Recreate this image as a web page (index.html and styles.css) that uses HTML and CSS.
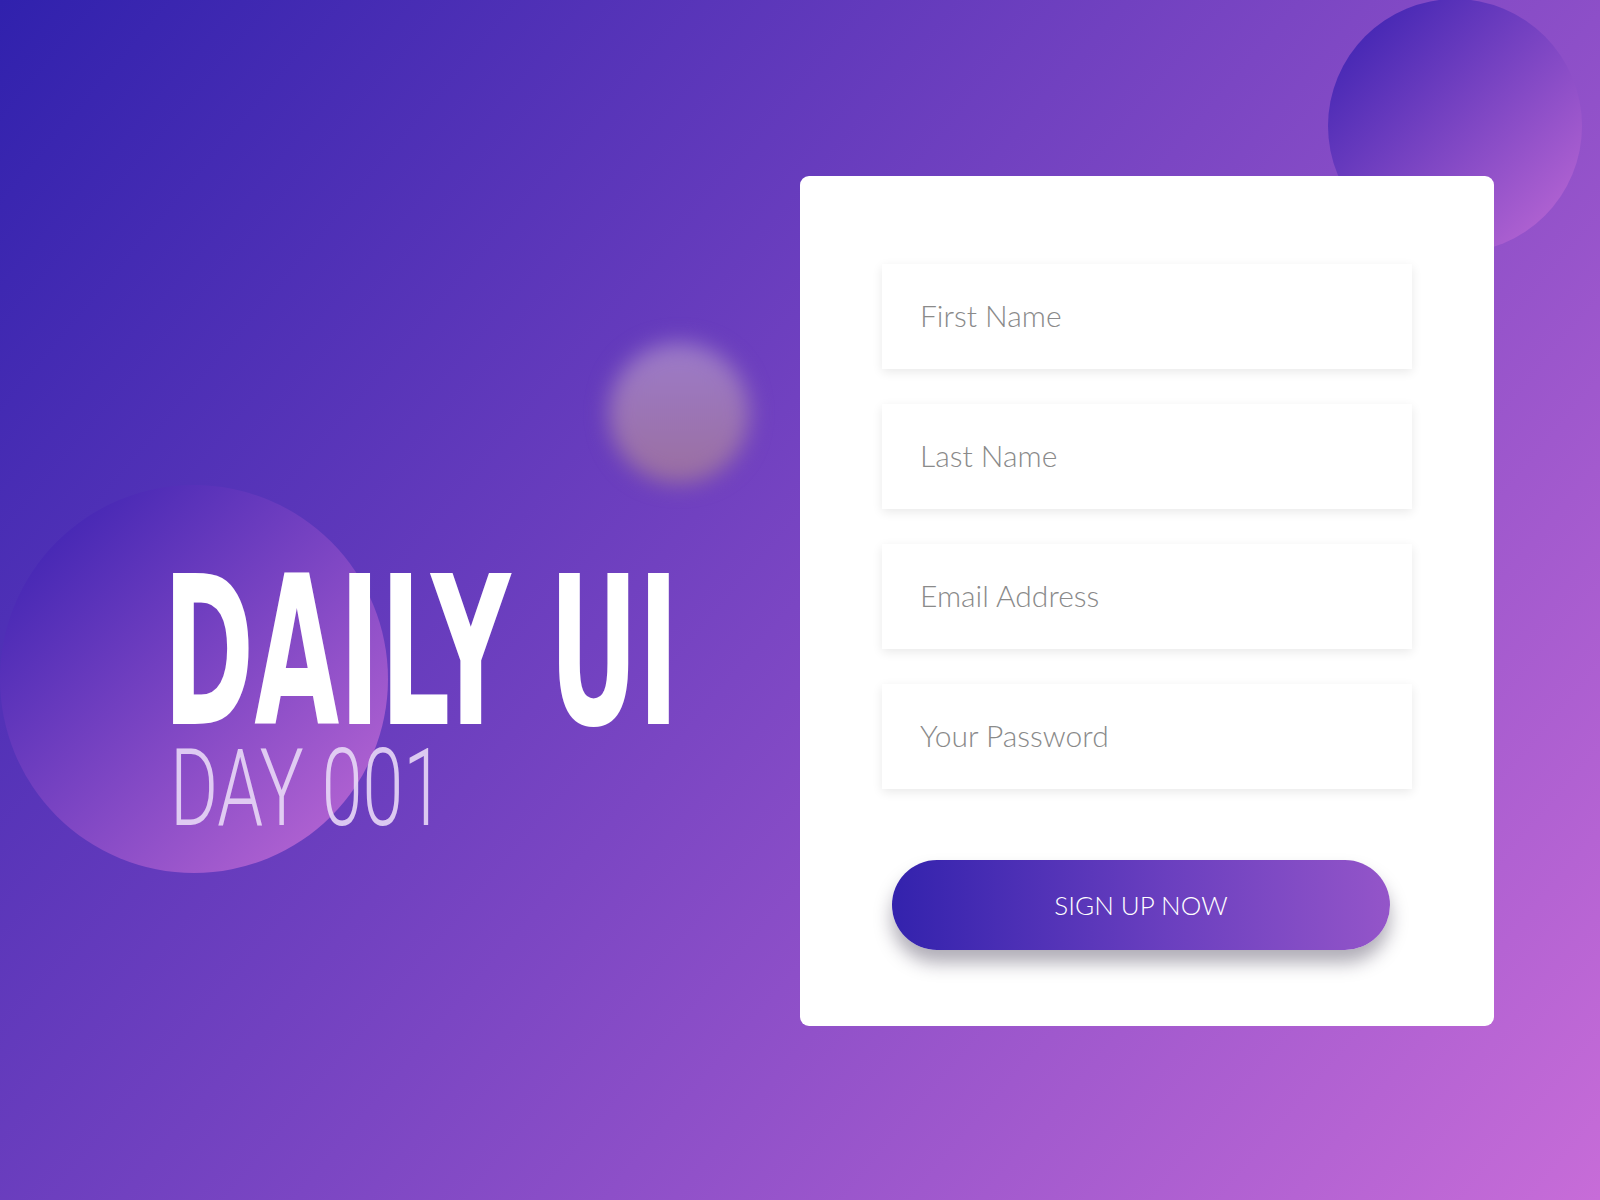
FILE: index.html
```html
<!DOCTYPE html>
<html lang="en">
<head>
<meta charset="utf-8">
<title>Daily UI - Day 001</title>
<link rel="stylesheet" href="styles.css">
</head>
<body>
<div class="page">
  <div class="blob blob-left"></div>
  <div class="blob blob-right"></div>
  <div class="orb"></div>
  <main class="layout">
    <header class="title">
      <h1 class="title-main">DAILY UI</h1>
      <p class="title-sub">DAY 001</p>
    </header>
    <form class="card">
      <input class="field" type="text" placeholder="First Name">
      <input class="field" type="text" placeholder="Last Name">
      <input class="field" type="email" placeholder="Email Address">
      <input class="field" type="password" placeholder="Your Password">
      <button class="signup" type="button">SIGN UP NOW</button>
    </form>
  </main>
</div>
</body>
</html>
```
FILE: styles.css
```css
html, body {
  margin: 0;
  padding: 0;
}
body {
  width: 1600px;
  height: 1200px;
  overflow: hidden;
  font-family: "Lato", "Open Sans", sans-serif;
}
.page {
  position: relative;
  width: 1600px;
  height: 1200px;
  overflow: hidden;
  background: linear-gradient(130deg, #3021ad 0%, #7b46c3 50%, #c76cd8 100%);
}
.blob {
  position: absolute;
  border-radius: 50%;
  background: linear-gradient(135deg, #4527b4 12%, #b665d3 92%);
}
.blob-left {
  left: 0;
  top: 485px;
  width: 388px;
  height: 388px;
}
.blob-right {
  left: 1328px;
  top: -1px;
  width: 254px;
  height: 254px;
}
.orb {
  position: absolute;
  left: 609px;
  top: 343px;
  width: 140px;
  height: 140px;
  border-radius: 50%;
  background: linear-gradient(180deg, #9c7bca 0%, #9b6f9f 100%);
  filter: blur(11px);
}
.layout {
  position: relative;
  display: flex;
  padding: 176px 0 0 170px;
}
.title {
  width: 630px;
  flex: none;
  margin-top: 397px;
}
.title-main {
  margin: 0 0 0 -7px;
  font-family: "Liberation Sans Narrow", "DejaVu Sans Condensed", "Liberation Sans", sans-serif;
  font-weight: 700;
  font-size: 207px;
  line-height: 160px;
  height: 160px;
  color: #ffffff;
  white-space: nowrap;
  transform: scaleX(0.59);
  transform-origin: 0 0;
}
.title-sub {
  margin: 16px 0 0 0;
  font-family: "Roboto", "DejaVu Sans Condensed", sans-serif;
  font-weight: 300;
  font-size: 107px;
  line-height: 80px;
  height: 80px;
  color: rgba(232, 216, 246, 0.9);
  white-space: nowrap;
  transform: scaleX(0.686);
  transform-origin: 0 0;
}
.card {
  flex: none;
  width: 694px;
  height: 850px;
  box-sizing: border-box;
  margin: 0;
  padding: 88px 82px 0;
  background: #ffffff;
  border-radius: 9px;
  display: flex;
  flex-direction: column;
  gap: 35px;
}
.field {
  display: block;
  width: 530px;
  height: 105px;
  box-sizing: border-box;
  border: none;
  outline: none;
  padding: 0 0 4px 38px;
  background: #ffffff;
  box-shadow: 0 3px 10px rgba(0, 0, 0, 0.09);
  font-family: "Lato", "Open Sans", sans-serif;
  font-weight: 300;
  font-size: 30px;
  color: #8a8a8a;
}
.field::placeholder {
  color: #8a8a8a;
  opacity: 1;
}
.signup {
  display: block;
  width: 498px;
  height: 90px;
  margin: 36px 0 0 10px;
  border: none;
  border-radius: 45px;
  background: linear-gradient(90deg, #3322ad 0%, #6a3fbf 55%, #9455c9 100%);
  box-shadow: 0 13px 18px rgba(30, 20, 50, 0.35);
  color: #ffffff;
  font-family: "Lato", "Open Sans", sans-serif;
  font-weight: 300;
  font-size: 26px;
  letter-spacing: 0;
  cursor: pointer;
}
```
